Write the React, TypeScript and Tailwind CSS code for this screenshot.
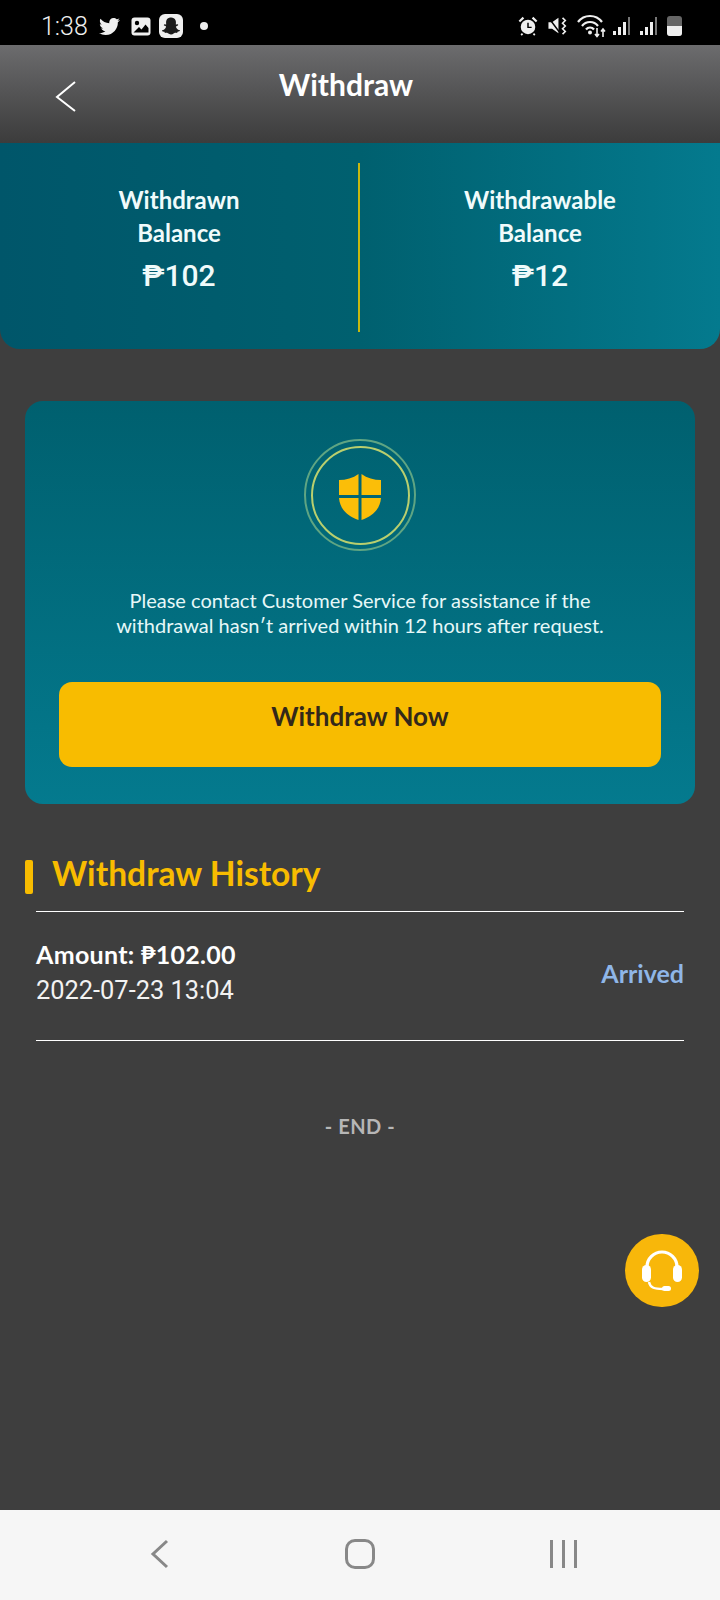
import { FaTwitter, FaSnapchatGhost } from "react-icons/fa";

const font = { fontFamily: "Lato, 'Liberation Sans', sans-serif" };

function SignalBars() {
  return (
    <div className="flex items-end gap-[2px] h-[18px] w-[17px]">
      <div className="w-[3px] h-[4px] bg-[#efefef]" />
      <div className="w-[3px] h-[8px] bg-[#efefef]" />
      <div className="w-[3px] h-[13px] bg-[#efefef]" />
      <div className="w-[2px] h-[18px] bg-[#777]" />
    </div>
  );
}

function StatusBar() {
  return (
    <div className="h-[45px] shrink-0 bg-black flex items-center pt-[7px] pl-[41px] pr-[38px] text-[#efefef]">
      <span className="font-['Roboto',sans-serif] text-[25px] font-light leading-none w-[58px]">1:38</span>
      <FaTwitter className="text-[21px]" />
      <svg width="20" height="19" viewBox="0 0 20 19" className="ml-[11px]">
        <rect width="19" height="18" x="0.5" y="0.5" rx="3" fill="#efefef" />
        <circle cx="6" cy="6" r="2.2" fill="#000" />
        <path d="M2.5 15.5 L8 10 L10.5 12.5 L14.5 7.5 L17.5 11 V15.5 H2.5 Z" fill="#000" />
      </svg>
      <div className="ml-[8px] w-[24px] h-[24px] rounded-[6px] bg-[#efefef] flex items-center justify-center">
        <FaSnapchatGhost className="text-[18px] text-[#1a1a1a]" />
      </div>
      <div className="ml-[17px] w-[8px] h-[8px] rounded-full bg-[#efefef]" />
      <div className="ml-auto flex items-center">
        <svg width="20" height="20" viewBox="0 0 22 22">
          <circle cx="11" cy="12" r="8" fill="#efefef" />
          <path d="M11 7.5 V12.5 H15" stroke="#000" strokeWidth="1.6" fill="none" />
          <path d="M1.5 6 L6 1.8 M20.5 6 L16 1.8" stroke="#efefef" strokeWidth="2.4" />
          <path d="M5 19.5 L3.5 21 M17 19.5 L18.5 21" stroke="#efefef" strokeWidth="2" />
        </svg>
        <svg width="20" height="20" viewBox="0 0 21 22" className="ml-[10px]">
          <path d="M0 7 H4 L11 2 V19 L4 14 H0 Z" fill="#efefef" />
          <path d="M1 3 L13 19" stroke="#000" strokeWidth="1.6" />
          <path d="M15.5 2 L18.5 5 L15.5 8 L18.5 11 L15.5 14 L18.5 17 L15.5 20" stroke="#efefef" strokeWidth="1.8" fill="none" />
        </svg>
        <svg width="30" height="24" viewBox="0 0 30 24" className="ml-[9px]">
          <path d="M1 8 A15 15 0 0 1 25 8 M5 12 A10 10 0 0 1 21 12 M9 15.5 A5 5 0 0 1 17 15.5" stroke="#efefef" strokeWidth="2.2" fill="none" />
          <circle cx="13" cy="18.5" r="2" fill="#efefef" />
          <path d="M20 14 V22 M18 20 L20 22.5 L22 20 M26 23 V15 M24 17.5 L26 15 L28 17.5" stroke="#efefef" strokeWidth="1.6" fill="none" />
        </svg>
        <div className="ml-[6px]">
          <SignalBars />
        </div>
        <div className="ml-[10px]">
          <SignalBars />
        </div>
        <div className="ml-[10px] w-[15px] h-[20px] rounded-[3px] bg-[#666] overflow-hidden flex flex-col justify-end">
          <div className="h-[10px] bg-[#efefef]" />
        </div>
      </div>
    </div>
  );
}

function BalanceColumn({ label, sub, amount }: { label: string; sub: string; amount: string }) {
  return (
    <div className="flex-1 flex flex-col items-center pt-[20px] text-[#f0fbfb]">
      <div className="text-[24px] font-bold leading-[33px] text-center">
        {label}
        <br />
        {sub}
      </div>
      <div className="mt-[8px] text-[30px] font-medium leading-[38px] font-['Roboto',sans-serif]">
        ₱{amount}
      </div>
    </div>
  );
}

export default function App() {
  return (
    <div className="relative w-[720px] h-[1600px] flex flex-col bg-[#3e3e3e] overflow-hidden" style={font}>
      <StatusBar />

      {/* Header */}
      <div className="relative h-[98px] shrink-0 bg-gradient-to-b from-[#6c6c6e] to-[#3c3c3c] flex items-start">
        <svg width="22" height="32" viewBox="0 0 22 32" className="ml-[55px] mt-[35px]">
          <path d="M20 2 L2 17 L20 31" stroke="#fff" strokeWidth="2" fill="none" />
        </svg>
        <div className="absolute left-0 top-[19px] w-[692px] text-center text-white text-[30px] font-bold leading-[40px]">
          Withdraw
        </div>
      </div>

      {/* Balances */}
      <div className="h-[206px] shrink-0 flex rounded-b-[20px] bg-gradient-to-r from-[#00566a] via-[#00606f] to-[#047a8e] py-[20px]">
        <div className="w-[358px] flex">
          <BalanceColumn label="Withdrawn" sub="Balance" amount="102" />
        </div>
        <div className="w-[2px] h-[169px] bg-[#c8b80f]" />
        <div className="flex-1 flex">
          <BalanceColumn label="Withdrawable" sub="Balance" amount="12" />
        </div>
      </div>

      {/* Notice card */}
      <div className="mx-[25px] mt-[52px] h-[403px] rounded-[18px] bg-gradient-to-b from-[#00606f] to-[#047a8e] flex flex-col items-center">
        <div className="mt-[38px] w-[112px] h-[112px] rounded-full border-2 border-[#5fa583] flex items-center justify-center">
          <div className="w-[99px] h-[99px] rounded-full border-2 border-[#b9cf6e] flex items-center justify-center pt-[3px]">
            <svg width="44" height="48" viewBox="0 0 44 48">
              <path d="M20.5 1 V22 H1 V7 C8 7 15 5 20.5 1 Z" fill="#fbbe08" />
              <path d="M23.5 1 C29 5 36 7 43 7 V22 H23.5 Z" fill="#fbbe08" />
              <path d="M1 25 H20.5 V47 C9 43 2 36 1 25 Z" fill="#fbbe08" />
              <path d="M23.5 25 H43 C42 36 35 43 23.5 47 Z" fill="#fbbe08" />
            </svg>
          </div>
        </div>
        <p className="mt-[37px] text-[20px] leading-[25px] text-center text-[#e6f8f8] font-normal">
          Please contact Customer Service for assistance if the
          <br />
          withdrawal hasn′t arrived within 12 hours after request.
        </p>
        <button className="mt-[44px] w-[602px] h-[85px] rounded-[13px] bg-[#f8bc00] text-[#33281a] text-[26px] font-bold flex justify-center pt-[17px] leading-[34px]">
          Withdraw Now
        </button>
      </div>

      {/* History */}
      <div className="mt-[55px] ml-[25px] flex items-center h-[36px]">
        <div className="w-[8px] h-[34px] rounded-[2px] bg-[#f8bc00]" />
        <span className="ml-[19px] pb-[8px] text-[33.6px] font-bold text-[#f8bc00] leading-[36px]">Withdraw History</span>
      </div>
      <div className="mx-[36px] mt-[16px] border-t border-white" />
      <div className="mx-[36px] h-[129px] flex items-center justify-between border-b border-white pb-[7px]">
        <div>
          <div className="text-[25px] font-bold text-white leading-[33px] tracking-[0.3px]">Amount: ₱102.00</div>
          <div className="mt-[3px] text-[25.4px] text-[#f2f2f2] leading-[33px] font-['Roboto',sans-serif]">
            2022-07-23 13:04
          </div>
        </div>
        <span className="pt-[2px] text-[25px] font-bold text-[#8fb6e8]">Arrived</span>
      </div>
      <div className="mt-[71px] text-center text-[20px] font-bold tracking-[0.5px] text-[#b6b6b6] leading-[28px]">- END -</div>

      {/* Support button */}
      <div className="absolute left-[625px] top-[1234px] w-[74px] h-[73px] rounded-full bg-[#f8b70a] flex items-center justify-center">
        <svg width="46" height="46" viewBox="0 0 46 46">
          <path d="M8 24 V19 A15 15 0 0 1 38 19 V24" stroke="#fff" strokeWidth="3.2" fill="none" />
          <rect x="3" y="17" width="9" height="17" rx="4.5" fill="#fff" />
          <rect x="34" y="17" width="9" height="17" rx="4.5" fill="#fff" />
          <path d="M10 34 C11 40 16 41 24 41" stroke="#fff" strokeWidth="2.4" fill="none" />
          <rect x="23" y="38" width="9" height="5" rx="2.5" fill="#fff" />
        </svg>
      </div>

      {/* System nav */}
      <div className="mt-auto h-[90px] shrink-0 bg-[#f6f6f6] flex items-center justify-center gap-[175px] pl-[6px] pb-[2px]">
        <svg width="20" height="30" viewBox="0 0 20 30">
          <path d="M17 2 L3 15 L17 28" stroke="#888" strokeWidth="3" fill="none" />
        </svg>
        <div className="w-[30px] h-[30px] rounded-[10px] border-[3px] border-[#888]" />
        <div className="flex gap-[9px]">
          <div className="w-[3px] h-[28px] bg-[#888]" />
          <div className="w-[3px] h-[28px] bg-[#888]" />
          <div className="w-[3px] h-[28px] bg-[#888]" />
        </div>
      </div>
    </div>
  );
}
